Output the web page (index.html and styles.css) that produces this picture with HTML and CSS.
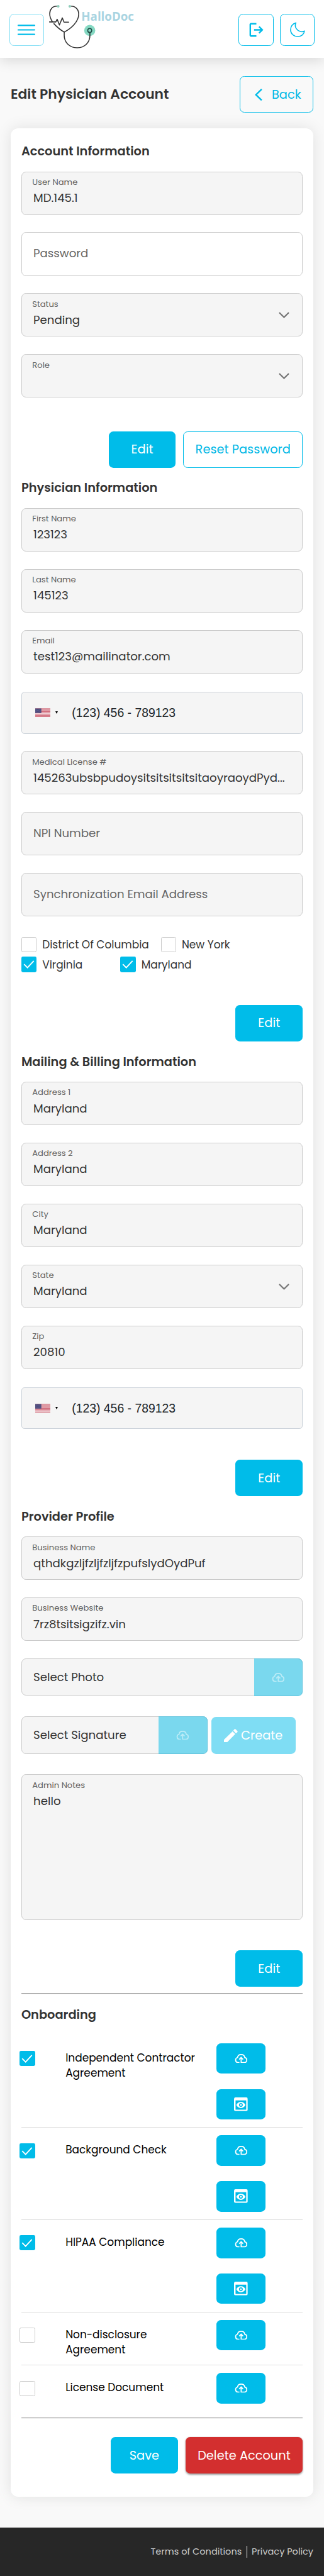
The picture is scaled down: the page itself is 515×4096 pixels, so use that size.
FILE: index.html
```html
<!DOCTYPE html>
<html lang="en">
<head>
<meta charset="utf-8">
<title>Edit Physician Account</title>
<link rel="stylesheet" href="styles.css">
</head>
<body>
<svg class="defs" width="0" height="0">
  <symbol id="chevron" viewBox="0 0 28 17"><path d="M1.5 1.5 14 14 26.5 1.5" fill="none" stroke="#757575" stroke-width="3.6"/></symbol>
  <symbol id="check" viewBox="0 0 40 40"><path d="M7 20 16 29.2 32.5 11.5" fill="none" stroke="#fff" stroke-width="3"/></symbol>
  <symbol id="cloud" viewBox="0 0 34 24"><path d="M12.5 22.6H8.5A6.9 6.9 0 0 1 7.6 9.1C8.2 4.6 12 1.5 17 1.5S25.800 4.600 26.500 9.200A6.800 6.800 0 0 1 25.500 22.600H17V9.500M11.800 14.200 17 9 22.200 14.200" fill="none" stroke="currentColor" stroke-width="2.8"/></symbol>
  <symbol id="preview" viewBox="0 0 36 36"><path fill="currentColor" fill-rule="evenodd" d="M4 0h28a4 4 0 0 1 4 4v28a4 4 0 0 1-4 4H4a4 4 0 0 1-4-4V4a4 4 0 0 1 4-4ZM4 8v24h28V8ZM18 12c5.500 0 9.800 3.200 12 8-2.200 4.800-6.500 8-12 8s-9.800-3.200-12-8c2.200-4.800 6.500-8 12-8Zm0 3a5 5 0 1 0 0 10 5 5 0 0 0 0-10Zm0 2.600a2.400 2.400 0 1 1 0 4.800 2.400 2.400 0 0 1 0-4.800Z"/></symbol>
  <symbol id="flag" viewBox="0 0 40 22"><path fill="#fff" d="M0 0h40v22H0z"/><path stroke="#c0364b" stroke-width="1.700" d="M0 .85h40M0 4.200h40M0 7.600h40M0 11h40M0 14.400h40M0 17.800h40M0 21.150h40"/><path fill="#4b4a7c" d="M0 0h16v12H0z"/><path stroke="#8886ad" stroke-width="1" stroke-dasharray="1 2" d="M1 2.500h14M2.500 5h13M1 7.500h14M2.500 10h13"/></symbol>
</svg>
<div class="page">
  <header class="topbar">
    <button class="icon-btn faded"><svg width="46" height="28" viewBox="0 0 46 28"><path d="M1.500 2.200h43M1.500 14h43M1.500 25.700h43" stroke="#00bce9" stroke-width="3.600" stroke-linecap="round"/></svg></button>
    <svg class="logo" width="230" height="120" viewBox="126 10 230 120">
      <circle cx="236" cy="80" r="14.500" fill="#85d8c2"/>
      <g fill="none" stroke="#333" stroke-width="2.600" stroke-linecap="round" stroke-linejoin="round">
        <path d="M150 16.200C138 16 131 25 131 36c0 8 3 15 7 20.500M187 16.200c12 0 20 9 20 21 0 20-20 38-38 47-9-5-19-13-27-22"/>
        <path d="M130.500 57.700H147l3.500-7 6 15L164 47l4.500 11.200h12.200"/>
        <path d="M169 84v9c0 18 14 32.500 34 32.500S236.500 111 236.500 93v-8"/>
        <circle cx="236" cy="80" r="5.200" stroke="#1f4a44"/>
      </g>
      <circle cx="153.300" cy="16.800" r="3.500" fill="#8fcdb9"/><circle cx="183.700" cy="16.800" r="3.500" fill="#8fcdb9"/>
      <text class="brand" x="214" y="54.500" textLength="138" lengthAdjust="spacingAndGlyphs">HalloDoc</text>
    </svg>
    <div class="topbar-end">
      <button class="icon-btn"><svg width="38" height="38" viewBox="0 0 38 38"><path d="M19 3H4.500a1.500 1.500 0 0 0-1.500 1.500v29A1.500 1.500 0 0 0 4.500 35H19M13 19h21M26 10.500l8.500 8.500-8.500 8.500" fill="none" stroke="#00bce9" stroke-width="4"/></svg></button>
      <button class="icon-btn"><svg width="40" height="40" viewBox="0 0 40 40"><path d="M15.500 2C6.500 5 1.500 12 1.500 20.500 1.500 30.500 9.500 38 20.500 38 29.500 38 37 32 38 23.500 34 26 30.500 26 27 24.800 18 22 10.500 13.500 15.500 2Z" fill="none" stroke="#00bce9" stroke-width="2.600" stroke-linejoin="round"/></svg></button>
    </div>
  </header>

  <main class="main">
    <div class="title-row">
      <h1 class="title">Edit Physician Account</h1>
      <button class="btn outline back"><svg width="20" height="32" viewBox="0 0 20 32"><path d="M18 1.500 3 16l15 14.500" fill="none" stroke="#00bce9" stroke-width="4"/></svg>Back</button>
    </div>

    <div class="card">
      <h2 class="heading">Account Information</h2>
      <div class="fields">
        <div class="field"><span class="label">User Name</span><span class="value">MD.145.1</span></div>
        <div class="field enabled"><span class="placeholder">Password</span></div>
        <div class="field select"><span class="label">Status</span><span class="value">Pending</span><svg class="chev"><use href="#chevron"/></svg></div>
        <div class="field select"><span class="label">Role</span><span class="value"></span><svg class="chev"><use href="#chevron"/></svg></div>
      </div>
      <div class="actions wide"><button class="btn">Edit</button><button class="btn outline">Reset Password</button></div>

      <h2 class="heading">Physician Information</h2>
      <div class="fields">
        <div class="field"><span class="label">First Name</span><span class="value">123123</span></div>
        <div class="field"><span class="label">Last Name</span><span class="value">145123</span></div>
        <div class="field"><span class="label">Email</span><span class="value">test123@mailinator.com</span></div>
        <div class="phone"><svg class="flag"><use href="#flag"/></svg><i class="caret"></i>(123) 456 - 789123</div>
        <div class="field"><span class="label">Medical License #</span><span class="value">145263ubsbpudoysitsitsitsitsitaoyraoydPyd...</span></div>
        <div class="field"><span class="placeholder">NPI Number</span></div>
        <div class="field"><span class="placeholder">Synchronization Email Address</span></div>
      </div>
      <div class="checks">
        <div class="check-row">
          <label class="check"><span class="box"></span>District Of Columbia</label>
          <label class="check"><span class="box"></span>New York</label>
        </div>
        <div class="check-row">
          <label class="check fixed"><span class="box on"><svg><use href="#check"/></svg></span>Virginia</label>
          <label class="check"><span class="box on"><svg><use href="#check"/></svg></span>Maryland</label>
        </div>
      </div>
      <div class="actions mid"><button class="btn">Edit</button></div>

      <h2 class="heading">Mailing &amp; Billing Information</h2>
      <div class="fields">
        <div class="field"><span class="label">Address 1</span><span class="value">Maryland</span></div>
        <div class="field"><span class="label">Address 2</span><span class="value">Maryland</span></div>
        <div class="field"><span class="label">City</span><span class="value">Maryland</span></div>
        <div class="field select"><span class="label">State</span><span class="value">Maryland</span><svg class="chev"><use href="#chevron"/></svg></div>
        <div class="field"><span class="label">Zip</span><span class="value">20810</span></div>
        <div class="phone"><svg class="flag"><use href="#flag"/></svg><i class="caret"></i>(123) 456 - 789123</div>
      </div>
      <div class="actions"><button class="btn">Edit</button></div>

      <h2 class="heading">Provider Profile</h2>
      <div class="fields">
        <div class="field"><span class="label">Business Name</span><span class="value">qthdkgzljfzljfzljfzpufslydOydPuf</span></div>
        <div class="field"><span class="label">Business Website</span><span class="value">7rz8tsitsigzifz.vin</span></div>
        <div class="upload"><span class="upload-text">Select Photo</span><span class="upload-btn"><svg class="cloud"><use href="#cloud"/></svg></span></div>
        <div class="signature">
          <div class="upload"><span class="upload-text">Select Signature</span><span class="upload-btn"><svg class="cloud"><use href="#cloud"/></svg></span></div>
          <button class="btn create"><svg width="36" height="36" viewBox="0 0 36 36"><path fill="#fff" d="M0 28.500 22.500 6.500l7 7L7.500 36H0ZM24.500 4.500l3-3.500q1.500-1.500 3 0l4.600 4.800q1.500 1.500 0 3L31.500 12Z"/></svg>Create</button>
        </div>
        <div class="field notes"><span class="label">Admin Notes</span><span class="value">hello</span></div>
      </div>
      <div class="actions"><button class="btn">Edit</button></div>
      <hr class="rule">

      <h2 class="heading">Onboarding</h2>
      <div class="docs">
        <div class="doc">
          <span class="box on"><svg><use href="#check"/></svg></span><span class="doc-name">Independent Contractor Agreement</span>
          <span class="doc-btns"><button class="small"><svg class="cloud"><use href="#cloud"/></svg></button><button class="small"><svg class="preview"><use href="#preview"/></svg></button></span>
        </div>
        <div class="doc">
          <span class="box on"><svg><use href="#check"/></svg></span><span class="doc-name">Background Check</span>
          <span class="doc-btns"><button class="small"><svg class="cloud"><use href="#cloud"/></svg></button><button class="small"><svg class="preview"><use href="#preview"/></svg></button></span>
        </div>
        <div class="doc">
          <span class="box on"><svg><use href="#check"/></svg></span><span class="doc-name">HIPAA Compliance</span>
          <span class="doc-btns"><button class="small"><svg class="cloud"><use href="#cloud"/></svg></button><button class="small"><svg class="preview"><use href="#preview"/></svg></button></span>
        </div>
        <div class="doc two-line">
          <span class="box"></span><span class="doc-name">Non-disclosure Agreement</span>
          <span class="doc-btns"><button class="small"><svg class="cloud"><use href="#cloud"/></svg></button></span>
        </div>
        <div class="doc one-line">
          <span class="box"></span><span class="doc-name">License Document</span>
          <span class="doc-btns"><button class="small"><svg class="cloud"><use href="#cloud"/></svg></button></span>
        </div>
      </div>
      <hr class="rule">
      <div class="actions final"><button class="btn">Save</button><button class="btn danger">Delete Account</button></div>
    </div>
  </main>

  <footer class="footer"><a class="link">Terms of Conditions</a><span class="sep"></span><a class="link">Privacy Policy</a></footer>
</div>
</body>
</html>
```
FILE: styles.css
```css
* { box-sizing: border-box; }
body { margin: 0; background: #f9f9f9; }
svg { display: block; flex: none; }
.defs { position: absolute; }
button { font: inherit; margin: 0; cursor: pointer; }

.page {
  zoom: 0.6058;
  font-family: Poppins, Inter, "Open Sans", sans-serif;
  color: #333;
  height: 6762px;
  display: flex;
  flex-direction: column;
}

/* Top bar */
.topbar {
  position: relative;
  display: flex;
  align-items: flex-start;
  height: 152px;
  padding: 36px 24px 0;
  background: #fff;
  box-shadow: 0 6px 34px rgba(0, 0, 0, .14);
}
.icon-btn {
  display: flex;
  align-items: center;
  justify-content: center;
  width: 92px;
  height: 84px;
  padding: 0;
  border: 2px solid #00bce9;
  border-radius: 12px;
  background: #fff;
}
.icon-btn.faded { border-color: #7fddf4; }
.logo { margin: -26px 0 0 10px; }
.brand { font-family: "Open Sans", sans-serif; font-size: 32px; font-weight: 700; fill: #a9d4e1; }
.topbar-end { display: flex; gap: 16px; margin-left: auto; }

.main { padding: 48px 28px 0; }
.title-row {
  display: flex;
  align-items: center;
  justify-content: space-between;
  height: 96px;
  margin-bottom: 40px;
}
.title { margin: 0; font-size: 36px; font-weight: 600; line-height: 54px; }

.card {
  height: 6218px;
  padding: 8px 28px 0;
  border-radius: 20px;
  background: #fff;
  box-shadow: 0 0 40px rgba(0, 0, 0, .1);
}
.heading {
  display: flex;
  align-items: center;
  height: 106px;
  margin: 0;
  font-size: 32px;
  font-weight: 600;
}

/* Fields */
.fields { display: flex; flex-direction: column; gap: 46px; }
.field {
  position: relative;
  display: flex;
  flex-direction: column;
  height: 114px;
  padding: 12px 30px 0;
  border: 2px solid #cbcbcb;
  border-radius: 12px;
  background: #f5f5f5;
}
.field.enabled { background: #fff; }
.label { margin-left: -3px; font-size: 21.7px; line-height: 30px; color: #5f5f5f; }
.value { margin-top: 5px; font-size: 30px; line-height: 42px; white-space: nowrap; }
.placeholder { margin-top: 21px; font-size: 30px; line-height: 42px; color: #666; }
.chev { position: absolute; right: 34px; top: 48px; width: 28px; height: 17px; }
.notes { height: 382px; }
.phone {
  display: flex;
  align-items: center;
  height: 110px;
  margin-top: 2px;
  padding-left: 35px;
  border: 2px solid #cad1d9;
  border-radius: 8px;
  background: #f5f5f5;
  color: #212529;
  font: 32px "Liberation Sans", Arial, sans-serif;
}
.flag { width: 40px; height: 27px; }
.caret {
  width: 8px;
  margin: 0 36px 0 12px;
  border: 4px solid transparent;
  border-top: 8px solid #000;
  border-bottom: 0;
}

/* Buttons */
.actions { display: flex; justify-content: flex-end; gap: 20px; margin-top: 80px; }
.actions.wide { margin-top: 88px; }
.actions.mid { margin-top: 86px; }
.actions.final { margin-top: 48px; }
.btn {
  display: flex;
  align-items: center;
  justify-content: center;
  min-width: 176px;
  height: 96px;
  padding: 0 32px;
  border: 0;
  border-radius: 12px;
  background: #00bce9;
  color: #fff;
  font-size: 32px;
  white-space: nowrap;
}
.btn.outline { border: 2px solid #00bce9; padding: 0 30px; background: transparent; color: #00b8e6; }
.btn.back { width: 194px; gap: 24px; padding: 0 0 0 9px; }
.btn.danger { background: #d32f2f; box-shadow: 0 3px 5px rgba(0, 0, 0, .4); }
.btn.create { width: 222px; gap: 8px; padding: 0; background: #7fddf4; }

/* Checkboxes */
.box { flex: none; width: 40px; height: 40px; border: 2px solid #cbcbcb; border-radius: 4px; background: #fff; }
.box.on { border: 0; background: #00bce9; }
.box svg { width: 40px; height: 40px; }
.checks { display: flex; flex-direction: column; gap: 12px; margin-top: 54px; }
.check-row { display: flex; gap: 31px; }
.check { display: flex; align-items: center; gap: 15px; height: 40px; font-size: 28px; white-space: nowrap; }
.check.fixed { width: 229px; }

/* Uploads */
.upload {
  display: flex;
  height: 98px;
  border: 2px solid #cbcbcb;
  border-radius: 12px;
  background: #f5f5f5;
}
.upload-text { flex: 1; padding-left: 30px; font-size: 30px; line-height: 96px; }
.upload-btn {
  display: flex;
  align-items: center;
  justify-content: center;
  width: 128px;
  margin: -2px;
  border: 2px solid #65c5de;
  border-left-width: 0;
  border-radius: 0 12px 12px 0;
  background: #7ad8ee;
  color: #bcecf7;
}
.cloud { width: 34px; height: 24px; }
.preview { width: 36px; height: 36px; }
.signature { display: flex; align-items: flex-end; gap: 10px; margin: 8px 0; }
.signature .upload { width: 488px; }

/* Onboarding */
.rule { width: 100%; height: 4px; margin: 16px 0 0; border: 0; border-top: 2px solid #999; background: #eee; }
.docs { margin-top: 2px; }
.doc {
  display: flex;
  align-items: flex-start;
  height: 242px;
  padding-top: 20px;
  border-bottom: 2px solid #dcdcdc;
}
.doc.two-line { height: 140px; }
.doc.one-line { height: 120px; border-bottom: 0; }
.doc .box { margin: 20px 80px 0 -4px; }
.doc-name { width: 396px; padding: 18px 36px 0 0; font-size: 28px; line-height: 40px; color: #000; }
.doc-btns { display: flex; flex-direction: column; gap: 40px; }
.small {
  display: flex;
  align-items: center;
  justify-content: center;
  width: 128px;
  height: 80px;
  padding: 0;
  border: 0;
  border-radius: 12px;
  background: #00bce9;
  color: #fff;
}

.footer {
  display: flex;
  align-items: center;
  justify-content: flex-end;
  height: 128px;
  margin-top: auto;
  padding-right: 28px;
  background: #272727;
}
.link { color: #ccc; font-size: 24px; }
.sep { width: 2px; height: 32px; margin: 0 12px; background: #fff; }
```
